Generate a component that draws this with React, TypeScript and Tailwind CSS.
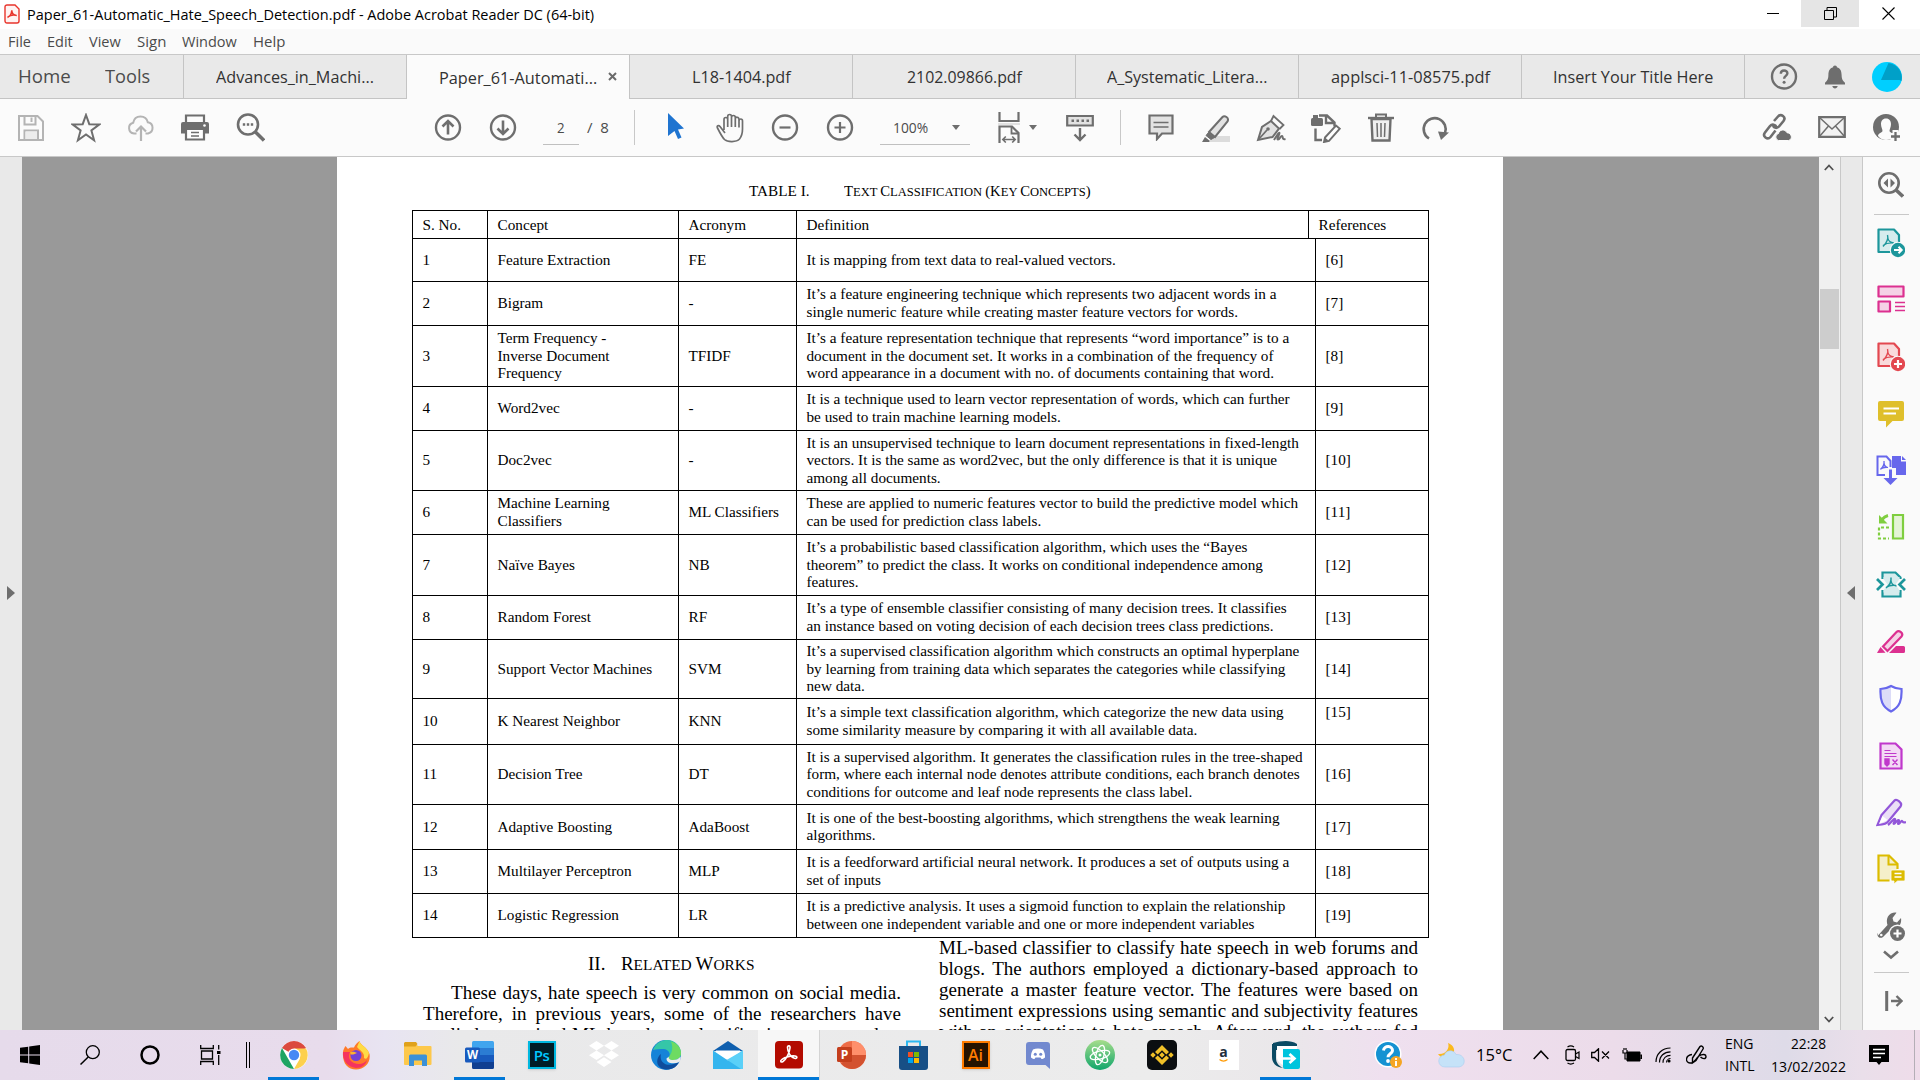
import React, { useLayoutEffect, useRef, useState } from "react";

type Kids = { children?: React.ReactNode };

/* A label squeezed or stretched to an exact width. */
function Fit({ w, className = "", children }: { w: number; className?: string } & Kids) {
  const ref = useRef<HTMLSpanElement>(null);
  const [scale, setScale] = useState(1);
  useLayoutEffect(() => {
    if (ref.current) setScale(w / ref.current.offsetWidth);
  }, [w]);
  return (
    <span className={"inline-block shrink-0 " + className} style={{ width: w }}>
      <span ref={ref} className="inline-block origin-left whitespace-nowrap" style={{ transform: `scaleX(${scale})` }}>
        {children}
      </span>
    </span>
  );
}

function Svg({ w = 28, h = 28, vb, className = "", children }: { w?: number; h?: number; vb?: string; className?: string } & Kids) {
  return (
    <svg width={w} height={h} viewBox={vb ?? `0 0 ${w} ${h}`} fill="none" className={"block shrink-0 " + className}>
      {children}
    </svg>
  );
}

const G = "#6e6e6e";

function Slot({ children, nudge }: { nudge?: boolean } & Kids) {
  return <div className={"flex w-[55px] shrink-0 items-center justify-center " + (nudge ? "pr-[2px]" : "")}>{children}</div>;
}

/* ---------- title bar, menu and tabs ---------- */

function TitleBar() {
  return (
    <div className="flex h-[29px] items-start bg-white">
      <Svg w={16} h={20} className="ml-1 mt-1">
        <path d="M3 1h8l4 4v12a2 2 0 0 1-2 2H3a2 2 0 0 1-2-2V3a2 2 0 0 1 2-2z" fill="#fff3f2" stroke="#e8352c" strokeWidth="1.4" />
        <path d="M3.500 13.500c2-1 4-4 4.300-7.300M7.800 6.200c0 3 2 5 5 5.300M4 12.800c2-1.600 5-2.200 8-1.600" stroke="#e8352c" strokeWidth="1.5" />
      </Svg>
      <Fit w={567} className="ml-[7px] mt-[3px] text-[15px] leading-[22px] text-black">
        Paper_61-Automatic_Hate_Speech_Detection.pdf - Adobe Acrobat Reader DC (64-bit)
      </Fit>
      <div className="ml-auto flex h-[27px]">
        <div className="flex w-[57px] items-center justify-center">
          <div className="h-px w-3 bg-black" />
        </div>
        <div className="flex w-[58px] items-center justify-center bg-[#e5e5e5]">
          <Svg w={13} h={13}>
            <path d="M.5 3.500h9v9h-9zM3 3V.5h9.500v9.500H10" stroke="#000" />
          </Svg>
        </div>
        <div className="flex w-[61px] items-center justify-center pr-[3px]">
          <Svg w={13} h={13}>
            <path d="M.5.5l12 12M12.500.5l-12 12" stroke="#000" strokeWidth="1.1" />
          </Svg>
        </div>
      </div>
    </div>
  );
}

function MenuBar() {
  return (
    <div className="flex h-[26px] items-center border-b border-[#c8c8c8] bg-[#fafafa] pl-2 text-[14.500px] text-[#4b4b4b]">
      <Fit w={23}>File</Fit>
      <Fit w={26} className="ml-[16px]">Edit</Fit>
      <Fit w={32} className="ml-[16px]">View</Fit>
      <Fit w={29} className="ml-[16px]">Sign</Fit>
      <Fit w={55} className="ml-[16px]">Window</Fit>
      <Fit w={32} className="ml-[16px]">Help</Fit>
    </div>
  );
}

function Tab({ w, children, active }: { w: number; active?: boolean } & Kids) {
  return (
    <div
      className={
        "relative flex w-[223px] shrink-0 items-center justify-center border-r border-[#c4c4c4] pt-px " +
        (active ? "bg-[#fbfbfb]" : "border-b bg-[#e9e9e9]")
      }
    >
      <Fit w={w}>{children}</Fit>
      {active && (
        <Svg w={9} h={9} className="absolute right-[12px] top-[17px]">
          <path d="M1 1l7 7M8 1L1 8" stroke="#6a6a6a" strokeWidth="2" />
        </Svg>
      )}
    </div>
  );
}

function TabStrip() {
  return (
    <div className="flex h-[44px] bg-[#e9e9e9] text-[17px] text-[#323232]">
      <div className="flex w-[184px] shrink-0 items-center border-b border-r border-[#c4c4c4] pl-[18px] text-[19px] text-[#4b4b4b]">
        <Fit w={53}>Home</Fit>
        <Fit w={45} className="ml-[34px]">Tools</Fit>
      </div>
      <Tab w={158}>Advances_in_Machi...</Tab>
      <Tab w={158} active>Paper_61-Automati...</Tab>
      <Tab w={99}>L18-1404.pdf</Tab>
      <Tab w={115}>2102.09866.pdf</Tab>
      <Tab w={160}>A_Systematic_Litera...</Tab>
      <Tab w={159}>applsci-11-08575.pdf</Tab>
      <Tab w={160}>Insert Your Title Here</Tab>
      <div className="flex flex-1 items-center border-b border-[#c4c4c4] pl-[25px]">
        <Svg w={28} h={28}>
          <circle cx="14" cy="13.500" r="12" stroke={G} strokeWidth="2.400" />
          <path d="M10.800 10.700c0-4.300 6.600-4.100 6.600-.4 0 2.600-3.300 2.700-3.300 5.500" stroke={G} strokeWidth="2.400" />
          <circle cx="14.100" cy="19.300" r="1.500" fill={G} />
        </Svg>
        <Svg w={22} h={26} className="ml-[26px]">
          <path d="M11 1.500c1.300 0 1.900.8 1.900 1.800 3.600 1 4.600 4 4.700 7.500.1 4.800 1.200 6 3.400 8v1.700H1v-1.700c2.200-2 3.300-3.200 3.400-8 .1-3.500 1.100-6.500 4.700-7.500 0-1 .6-1.800 1.900-1.800zM8.300 22h5.400c-.3 1.600-1.400 2.400-2.700 2.400S8.600 23.600 8.300 22z" fill={G} />
        </Svg>
        <Svg w={30} h={30} className="ml-[26px]">
          <circle cx="15" cy="15" r="15" fill="#00cfff" />
          <path d="M16.500 1A15 15 0 0 1 29.500 19l-2-1H9z" fill="#00a0c8" />
        </Svg>
      </div>
    </div>
  );
}

/* ---------- toolbar ---------- */

function Caret() {
  return (
    <Svg w={8} h={5}>
      <path d="M0 0h8L4 5z" fill={G} />
    </Svg>
  );
}

function Toolbar() {
  return (
    <div className="flex h-[58px] items-stretch border-b border-[#c8c8c8] bg-[#fbfbfb] pl-[3px] text-[15px] text-[#4b4b4b]">
      <Slot>
        <Svg>
          <path d="M2 2h18.500l5.500 5.500V26H2z" stroke="#b4b4b4" strokeWidth="2" />
          <path d="M7.500 2v8.500h11V2M7.500 26v-9.500h13.500V26" stroke="#b4b4b4" strokeWidth="2" />
          <path d="M8.500 17.500h11.500V25H8.500z" fill="#ececec" />
          <path d="M14.500 3.500v4.500" stroke="#b4b4b4" strokeWidth="2" />
        </Svg>
      </Slot>
      <Slot>
        <Svg w={30} h={30}>
          <path d="M15 2l3.300 9.200 9.900.3-7.800 6 2.700 9.700L15 21.500l-8.100 5.700 2.700-9.700-7.800-6 9.900-.3z" stroke={G} strokeWidth="2" />
        </Svg>
      </Slot>
      <Slot>
        <Svg w={28} h={28}>
          <path d="M9.500 19.500H7a5.500 5.500 0 0 1-.8-10.800C7 4.500 10 2.500 13.500 2.500c3.700 0 6.500 2.300 7.300 5.800A5.700 5.700 0 0 1 21 19.500h-2.500" stroke="#b4b4b4" strokeWidth="2" />
          <path d="M14 27V13M9 17.500l5-5 5 5" stroke="#b4b4b4" strokeWidth="2.200" />
        </Svg>
      </Slot>
      <Slot nudge>
        <Svg w={28} h={28}>
          <path d="M5 8V1.500h18v6.500" stroke={G} strokeWidth="2.200" />
          <path d="M2 8h24a2 2 0 0 1 2 2v9.500h-5V15H5v4.500H0V10a2 2 0 0 1 2-2z" fill={G} />
          <path d="M5 15h18V25.500H5z" fill="#fff" stroke={G} strokeWidth="2.200" />
          <path d="M10 18.500h8M10 22h8" stroke={G} strokeWidth="1.400" />
          <circle cx="23.500" cy="11.500" r="1.300" fill="#fff" />
        </Svg>
      </Slot>
      <Slot>
        <Svg w={29} h={29}>
          <circle cx="12" cy="11.500" r="10" stroke={G} strokeWidth="2.600" />
          <path d="M19 18.500l9 9" stroke={G} strokeWidth="3.400" />
          <path d="M6.800 11.500h2.400m1.600 0h2.400m1.600 0h2.400" stroke={G} strokeWidth="2.400" />
        </Svg>
      </Slot>
      <div className="w-[142px] shrink-0" />
      <Slot>
        <Svg>
          <circle cx="14" cy="13.500" r="12" stroke={G} strokeWidth="2.400" />
          <path d="M14 20.500V7.500M8.500 12.500L14 7l5.500 5.500" stroke={G} strokeWidth="2.600" />
        </Svg>
      </Slot>
      <Slot>
        <Svg>
          <circle cx="14" cy="13.500" r="12" stroke={G} strokeWidth="2.400" />
          <path d="M14 6.500v13M8.500 14.500l5.500 5.500 5.500-5.500" stroke={G} strokeWidth="2.600" />
        </Svg>
      </Slot>
      <div className="ml-[13px] mt-[11px] flex h-[35px] w-[36px] items-center justify-center border-b border-[#c0c0c0]">
        <Fit w={8}>2</Fit>
      </div>
      <div className="ml-2 mt-[11px] flex h-[35px] items-center">
        <Fit w={22}>/&nbsp; 8</Fit>
      </div>
      <div className="ml-[25px] mt-[11px] h-[35px] w-px bg-[#c8c8c8]" />
      <div className="w-[13px] shrink-0" />
      <Slot>
        <Svg w={16} h={30}>
          <path d="M0 0l16 15.500-6 1 3.500 8L10 26l-3.500-8L0 23z" fill="#1f74d0" />
        </Svg>
      </Slot>
      <Slot nudge>
        <Svg w={28} h={30}>
          <path d="M9 20l-5-6.500c-1.500-2-3.500-.5-2.500 1.500C4 20 6 24 8.500 26.500c3 2.800 12 2.800 15-.5 2-2.500 3-6 3-10V8c0-2.700-3.500-2.700-3.500 0v6.500M8 17V6.500c0-2.700 3.700-2.700 3.700 0V14M11.700 7V3.500c0-2.700 3.800-2.700 3.800 0V14M15.500 4.500c0-2.700 3.800-2.700 3.800 0V14M19.300 6c0-2.700 3.700-2.200 3.700.5v8" stroke={G} strokeWidth="1.700" />
        </Svg>
      </Slot>
      <Slot nudge>
        <Svg>
          <circle cx="14" cy="13.500" r="12" stroke={G} strokeWidth="2.400" />
          <path d="M8.500 13.500h11" stroke={G} strokeWidth="2.200" />
        </Svg>
      </Slot>
      <Slot nudge>
        <Svg>
          <circle cx="14" cy="13.500" r="12" stroke={G} strokeWidth="2.400" />
          <path d="M8.500 13.500h11M14 8v11" stroke={G} strokeWidth="2.200" />
        </Svg>
      </Slot>
      <div className="ml-[12px] mt-[11px] flex h-[35px] w-[90px] items-center border-b border-[#c0c0c0] pl-[13px]">
        <Fit w={35}>100%</Fit>
        <div className="ml-[24px]">
          <Caret />
        </div>
      </div>
      <div className="ml-[28px] flex items-center">
        <Svg w={22} h={31}>
          <path d="M1.500 0v9h19V0" stroke={G} strokeWidth="2.200" />
          <path d="M0 12h22" stroke="#d8d8d8" strokeWidth="1.500" />
          <path d="M1.500 31V14.500h12.500l6.500 6.500v10" stroke={G} strokeWidth="2.200" />
          <path d="M13.500 14.500V21.500h7" stroke={G} strokeWidth="1.800" />
          <path d="M5 27.500h12M7.800 24.500l-3 3 3 3M14.200 24.500l3 3-3 3" stroke={G} strokeWidth="1.600" />
        </Svg>
        <div className="ml-[9px]">
          <Caret />
        </div>
        <Svg w={28} h={28} className="ml-[29px]">
          <path d="M1.200 2h25.600v9.500H1.200z" fill="#e2e2e2" stroke={G} strokeWidth="2.200" />
          <path d="M5.500 6.800h2.500m2.500 0h2.500m2.500 0h2.500m2.500 0h2.500" stroke={G} strokeWidth="2.400" />
          <path d="M14 14v12M8.500 20.500l5.500 5.500 5.500-5.500" stroke={G} strokeWidth="2.400" />
        </Svg>
      </div>
      <div className="ml-[26px] mt-[11px] h-[35px] w-px bg-[#c8c8c8]" />
      <div className="w-[12px] shrink-0" />
      <Slot>
        <Svg w={26} h={27}>
          <path d="M1.500 1.500h23v18H14l-5 5.500v-5.500H1.500z" fill="#e2e2e2" stroke={G} strokeWidth="2.200" />
          <path d="M5.500 8.500h15M5.500 13h15" stroke={G} strokeWidth="1.500" />
        </Svg>
      </Slot>
      <Slot>
        <Svg w={28} h={28}>
          <path d="M8 28v-6h20v6z" fill="#dcdcdc" />
          <path d="M7 18L20.500 3c2-2 7 .5 5 4.500L13 23z" fill="#e2e2e2" stroke={G} strokeWidth="2" />
          <path d="M6.500 18.500l6 5-3.500 2-5-4z" fill={G} stroke={G} />
          <path d="M0 28l3-5 5 4-1 1z" fill={G} />
        </Svg>
      </Slot>
      <Slot>
        <Svg w={30} h={28}>
          <path d="M2 26L6 13l9-6 8 7.500-6.500 8.500z" fill="#e2e2e2" stroke={G} strokeWidth="2" />
          <path d="M15 7l2.500-5 10 9-4 4M2.500 25.500L11 16" stroke={G} strokeWidth="1.800" />
          <circle cx="12" cy="15" r="1.800" fill={G} />
          <path d="M18 26c3-5 5-8 5.500-7s-3.500 6.500-1.500 6.500 2.500-4 4-3.500-.5 4 3.500 3" stroke={G} strokeWidth="2" />
        </Svg>
      </Slot>
      <Slot>
        <Svg w={30} h={30}>
          <path d="M8 2.500h8l7.500 7v4M15 2.500v7.500h8.500M4.500 15.500V27H11" stroke={G} strokeWidth="2.400" />
          <rect x="0" y="5" width="12" height="8" rx="1.500" fill={G} />
          <path d="M2 5V2h5v3z" fill={G} />
          <path d="M14 24.500L25 12.500l3.800 3.200L18 27.800l-5 1.200z" fill="#fff" stroke={G} strokeWidth="1.900" />
          <path d="M13 29l1-4.500 3.500 3z" fill={G} />
        </Svg>
      </Slot>
      <Slot>
        <Svg w={26} h={29}>
          <path d="M0 5h26" stroke={G} strokeWidth="2.400" />
          <path d="M8 5V1.500h10V5" stroke={G} strokeWidth="2" />
          <path d="M3.500 6l1 21.500h17l1-21.500z" fill="#f0f0f0" stroke={G} strokeWidth="2.400" />
          <path d="M9 10l.5 14M13 10v14M17 10l-.5 14" stroke={G} strokeWidth="1.500" />
        </Svg>
      </Slot>
      <Slot nudge>
        <Svg w={28} h={26}>
          <path d="M8 23.500A11 11 0 1 1 24 18" stroke={G} strokeWidth="2.600" />
          <path d="M17 16.500l11 1-8 7.500z" fill={G} />
        </Svg>
      </Slot>
      <div className="ml-auto flex pr-[6px]">
        <Slot>
          <Svg w={30} h={30}>
            <path d="M12 8l4-4.500c3-3.500 8.500.5 5.500 4.500L17 13.500c-2 2.200-5 1.500-6-.5M13.500 17.500l-5 6.500c-3 3.500-8.500-.5-5.500-4.500L8 13c2-2.200 5.500-1.500 6.500 1" stroke={G} strokeWidth="2.600" />
            <path d="M16.500 27.500a3.600 3.600 0 0 1 0-7c.7-4 6.500-5 8.500-.8 5 .2 6 6.800 1.500 7.800z" fill={G} stroke="#fbfbfb" strokeWidth="1" />
          </Svg>
        </Slot>
        <Slot>
          <Svg w={28} h={24}>
            <path d="M1.200 1.200h25.600v19.600H1.200z" fill="#f2f2f2" stroke={G} strokeWidth="2.200" />
            <path d="M1.500 1.500L14 13 26.500 1.500M1.500 20.500l9-10.500M26.500 20.500L17.500 10" stroke={G} strokeWidth="1.500" />
          </Svg>
        </Slot>
        <Slot>
          <Svg w={28} h={28}>
            <circle cx="13" cy="13" r="13" fill={G} />
            <path d="M13 4.500c3.500 0 5 2.500 5 5.500 0 3.500-1.500 5-1.500 7 0 1.800 4.500 2 4.500 5-2 2.500-5 4-8 4s-6-1.500-8-4c0-3 4.500-3.200 4.500-5 0-2-1.500-3.500-1.500-7 0-3 1.500-5.500 5-5.500z" fill="#fbfbfb" />
            <path d="M22.500 16v12M16.500 22h12" stroke="#fbfbfb" strokeWidth="6" />
            <path d="M22.500 18v9M18 22.500h9" stroke={G} strokeWidth="2.300" />
          </Svg>
        </Slot>
      </div>
    </div>
  );
}

/* ---------- document ---------- */

type Row = { h: string; concept: string[]; acr: string; def: string[]; top?: boolean };

const rows: Row[] = [
  { h: "h-[43px]", concept: ["Feature Extraction"], acr: "FE", def: ["It is mapping from text data to real-valued vectors."] },
  { h: "h-[44px]", concept: ["Bigram"], acr: "-", def: ["It’s a feature engineering technique which represents two adjacent words in a", "single numeric feature while creating master feature vectors for words."] },
  { h: "h-[61px]", concept: ["Term Frequency -", "Inverse Document", "Frequency"], acr: "TFIDF", def: ["It’s a feature representation technique that represents “word importance” is to a", "document in the document set. It works in a combination of the frequency of", "word appearance in a document with no. of documents containing that word."] },
  { h: "h-[44px]", concept: ["Word2vec"], acr: "-", def: ["It is a technique used to learn vector representation of words, which can further", "be used to train machine learning models."] },
  { h: "h-[60px]", concept: ["Doc2vec"], acr: "-", def: ["It is an unsupervised technique to learn document representations in fixed-length", "vectors. It is the same as word2vec, but the only difference is that it is unique", "among all documents."] },
  { h: "h-[44px]", concept: ["Machine Learning", "Classifiers"], acr: "ML Classifiers", def: ["These are applied to numeric features vector to build the predictive model which", "can be used for prediction class labels."] },
  { h: "h-[61px]", concept: ["Naïve Bayes"], acr: "NB", def: ["It’s a probabilistic based classification algorithm, which uses the “Bayes", "theorem” to predict the class. It works on conditional independence among", "features."] },
  { h: "h-[44px]", concept: ["Random Forest"], acr: "RF", def: ["It’s a type of ensemble classifier consisting of many decision trees. It classifies", "an instance based on voting decision of each decision trees class predictions."] },
  { h: "h-[59px]", concept: ["Support Vector Machines"], acr: "SVM", def: ["It’s a supervised classification algorithm which constructs an optimal hyperplane", "by learning from training data which separates the categories while classifying", "new data."] },
  { h: "h-[46px]", concept: ["K Nearest Neighbor"], acr: "KNN", top: true, def: ["It’s a simple text classification algorithm, which categorize the new data using", "some similarity measure by comparing it with all available data."] },
  { h: "h-[60px]", concept: ["Decision Tree"], acr: "DT", def: ["It is a supervised algorithm. It generates the classification rules in the tree-shaped", "form, where each internal node denotes attribute conditions, each branch denotes", "conditions for outcome and leaf node represents the class label."] },
  { h: "h-[45px]", concept: ["Adaptive Boosting"], acr: "AdaBoost", def: ["It is one of the best-boosting algorithms, which strengthens the weak learning", "algorithms."] },
  { h: "h-[44px]", concept: ["Multilayer Perceptron"], acr: "MLP", def: ["It is a feedforward artificial neural network. It produces a set of outputs using a", "set of inputs"] },
  { h: "h-[44px]", concept: ["Logistic Regression"], acr: "LR", def: ["It is a predictive analysis. It uses a sigmoid function to explain the relationship", "between one independent variable and one or more independent variables"] },
];

function Lines({ lines }: { lines: string[] }) {
  return (
    <div>
      {lines.map((l) => (
        <div key={l} className="whitespace-nowrap">{l}</div>
      ))}
    </div>
  );
}

function ConceptTable() {
  const base = "flex shrink-0 items-center border-r border-black ";
  const head = base + "pl-[9.500px] ";
  const cell = base + "pb-[1.500px] pl-[9.500px] ";
  return (
    <div className="ml-[75px] w-[1017px] border-l border-t border-black text-[15.240px] leading-[17.500px]">
      <div className="flex h-[28px] border-b border-black">
        <div className={head + "w-[75px]"}>S. No.</div>
        <div className={head + "w-[191px]"}>Concept</div>
        <div className={head + "w-[118px]"}>Acronym</div>
        <div className={head + "w-[512px]"}>Definition</div>
        <div className={head + "w-[120px]"}>References</div>
      </div>
      {rows.map((r, i) => (
        <div key={i} className={"flex border-b border-black " + r.h}>
          <div className={cell + "w-[75px]"}>{i + 1}</div>
          <div className={cell + "w-[191px]"}><Lines lines={r.concept} /></div>
          <div className={cell + "w-[118px]"}>{r.acr}</div>
          <div className={cell + "w-[519px]"}><Lines lines={r.def} /></div>
          <div className={base + "w-[113px] pl-[9.500px] " + (r.top ? "pb-[19px]" : "pb-[1.500px]")}>[{i + 6}]</div>
        </div>
      ))}
    </div>
  );
}

/* Pairs of a full-size initial and the smaller capitals after it. */
function SmallCaps({ parts, small }: { parts: [string, string][]; small: string }) {
  return (
    <>
      {parts.map(([a, b]) => (
        <React.Fragment key={a + b}>
          {a}
          <span className={small}>{b}</span>
        </React.Fragment>
      ))}
    </>
  );
}

function Page() {
  const line = "whitespace-nowrap [text-align-last:justify]";
  return (
    <div className="h-full w-[1166px] shrink-0 overflow-hidden bg-white font-['Liberation_Serif',serif] text-black">
      <div className="flex h-[53px] items-start pl-[412px] pt-[25px] text-[15.240px] leading-[18px]">
        <Fit w={61}>TABLE I.</Fit>
        <Fit w={247} className="ml-[34px]">
          <SmallCaps small="text-[13px]" parts={[["T", "EXT "], ["C", "LASSIFICATION "], ["(K", "EY "], ["C", "ONCEPTS"], [")", ""]]} />
        </Fit>
      </div>
      <ConceptTable />
      <div className="-mt-px flex pl-[86px] text-[19.050px] leading-[21px]">
        <div className="w-[478px] shrink-0 pt-[16px]">
          <div className="flex pl-[165px]">
            <Fit w={17}>II.</Fit>
            <Fit w={133} className="ml-[16px]">
              <SmallCaps small="text-[15.500px]" parts={[["R", "ELATED "], ["W", "ORKS"]]} />
            </Fit>
          </div>
          <div className={line + " ml-[28px] mt-[7px]"}>These days, hate speech is very common on social media.</div>
          <div className={line}>Therefore, in previous years, some of the researchers have</div>
          <div className={line}>applied supervised ML-based text classification on many data</div>
        </div>
        <div className="ml-[38px] w-[479px] shrink-0">
          <div className={line}>ML-based classifier to classify hate speech in web forums and</div>
          <div className={line}>blogs. The authors employed a dictionary-based approach to</div>
          <div className={line}>generate a master feature vector. The features were based on</div>
          <div className={line}>sentiment expressions using semantic and subjectivity features</div>
          <div className={line}>with an orientation to hate speech. Afterward, the authors fed</div>
        </div>
      </div>
    </div>
  );
}

/* ---------- right tool pane ---------- */

function ToolSlot({ children }: Kids) {
  return <div className="flex h-[56.920px] shrink-0 items-center justify-center pr-[2px]">{children}</div>;
}

function PdfDoc({ c, fill, children }: { c: string; fill: string } & Kids) {
  return (
    <Svg w={28} h={30}>
      <path d="M1.500 1.500h15.500l5 5.500v17H1.500z" fill={fill} stroke={c} strokeWidth="2.200" strokeLinejoin="round" />
      <path d="M10.500 7c1 3-.5 8-4.500 11.500M10.800 10c.5 3 3 4.500 6 5M6 17.500c3-2.200 6-3 10.500-2.500" stroke={c} strokeWidth="1.400" />
      <circle cx="21" cy="22" r="8.300" fill="#fafafa" />
      <circle cx="21" cy="22" r="7.200" fill={c} />
      {children}
    </Svg>
  );
}

function ToolPane() {
  return (
    <div className="flex w-[57px] shrink-0 flex-col bg-[#fafafa]">
      <div className="flex h-[57px] items-center justify-center pr-[2px]">
        <Svg w={26} h={27}>
          <circle cx="11" cy="11" r="9.700" stroke={G} strokeWidth="2.600" />
          <path d="M17.500 17.500l7.500 7" stroke={G} strokeWidth="3.600" />
          <path d="M10 6.500v9l-4.500-4.500zM12.500 6.500v9l4.500-4.500z" fill={G} />
        </Svg>
      </div>
      <div className="mx-auto h-px w-[35px] shrink-0 bg-[#c8c8c8]" />
      <ToolSlot>
        <PdfDoc c="#1c969b" fill="#d6eced">
          <path d="M17 22h7M21.500 18.800l3.200 3.200-3.200 3.200" stroke="#fff" strokeWidth="2" />
        </PdfDoc>
      </ToolSlot>
      <ToolSlot>
        <Svg w={28} h={30}>
          <path d="M1.500 1.500h25v10h-25zM1.500 16.500h11.500v10H1.500z" fill="#f5d2e6" stroke="#dc3090" strokeWidth="2.200" strokeLinejoin="round" />
          <path d="M18 17.500h10M18 21.500h10M18 25.500h10" stroke="#dc3090" strokeWidth="1.300" />
        </Svg>
      </ToolSlot>
      <ToolSlot>
        <PdfDoc c="#e34850" fill="#f9dadb">
          <path d="M17 22h8M21 18v8" stroke="#fff" strokeWidth="2.200" />
        </PdfDoc>
      </ToolSlot>
      <ToolSlot>
        <Svg w={26} h={28}>
          <path d="M2 1h22a2 2 0 0 1 2 2v16a2 2 0 0 1-2 2h-9.500L8 27.500V21H2a2 2 0 0 1-2-2V3a2 2 0 0 1 2-2z" fill="#dfbf2b" />
          <path d="M5.500 8.500h15.500M5.500 13.500h12.500" stroke="#fff" strokeWidth="2" />
        </Svg>
      </ToolSlot>
      <ToolSlot>
        <Svg w={30} h={32}>
          <path d="M9 20H1.500V1.500h9l4 4.500v6" stroke="#6767ec" strokeWidth="2" />
          <path d="M8 6c.5 3-1 6-3.500 8.500M8 8.500c.5 2.500 2 4 4 4.200M4.500 14c2-1.500 4-2 7-1.700" stroke="#6767ec" strokeWidth="1.300" />
          <path d="M16 1h9v5.500h5V20H20v-7h-4z" fill="#6767ec" />
          <path d="M26 1l4 4h-4z" fill="#6767ec" />
          <path d="M14.500 13v10" stroke="#fafafa" strokeWidth="7" />
          <path d="M14.500 14.500V24" stroke="#6767ec" strokeWidth="3" />
          <path d="M7.500 23h14l-7 7z" fill="#6767ec" />
        </Svg>
      </ToolSlot>
      <ToolSlot>
        <Svg w={28} h={29}>
          <path d="M16 2h10v23.500H16z" fill="#e4f4d6" stroke="#7fce3f" strokeWidth="2.200" />
          <path d="M12 14.500H2v11h10" stroke="#7fce3f" strokeWidth="2.200" strokeDasharray="3 2" />
          <path d="M11 2.500C9 3 7 4 5 6.500" stroke="#7fce3f" strokeWidth="3" />
          <path d="M2 2v8.500h8.500z" fill="#7fce3f" />
        </Svg>
      </ToolSlot>
      <ToolSlot>
        <Svg w={30} h={28}>
          <path d="M6.500 8V1.500h13l5 5V8M6.500 19v6.500h18V19" stroke="#1c969b" strokeWidth="2.200" fill="#d6eced" />
          <path d="M7.500 6h16v2l-4 5.500 4 6v2h-16v-2l4-6-4-5.500z" fill="#d6eced" />
          <path d="M1 8l5.500 5.500L1 19M29 8l-5.500 5.500L29 19" stroke="#1c969b" strokeWidth="2.700" />
          <path d="M15 6.500c.5 4-1 7.500-5 10.500M15 10c.5 3 2.500 4.500 5.500 5M10 16.500c3-2 6-2.500 10-2" stroke="#1c969b" strokeWidth="1.500" />
        </Svg>
      </ToolSlot>
      <ToolSlot>
        <Svg w={28} h={26}>
          <path d="M12 24l7-7h7.500a1.500 1.500 0 0 1 1.500 1.500V22.500a1.500 1.500 0 0 1-1.500 1.500z" fill="#dc3090" />
          <path d="M6 17.500L19.500 3c2.500-2.500 7.500 1.500 5 4.500L10.500 22z" fill="#f5d2e6" stroke="#dc3090" strokeWidth="2.200" />
          <path d="M0 24l3.500-6 5 5.800z" fill="#dc3090" />
        </Svg>
      </ToolSlot>
      <ToolSlot>
        <Svg w={24} h={29}>
          <path d="M12 2C9.500 3.500 5.500 5 1.500 5c-.5 11 1.500 18 10.500 22.500C21 23 23 16 22.500 5 18.500 5 14.500 3.500 12 2z" fill="#fff" />
          <path d="M12 2C9.500 3.500 5.500 5 1.500 5c-.5 11 1.500 18 10.500 22.500z" fill="#dcdcf8" />
          <path d="M12 2C9.500 3.500 5.500 5 1.500 5c-.5 11 1.500 18 10.500 22.500C21 23 23 16 22.500 5 18.500 5 14.500 3.500 12 2z" stroke="#6767ec" strokeWidth="2.200" />
        </Svg>
      </ToolSlot>
      <ToolSlot>
        <Svg w={24} h={28}>
          <path d="M1.500 1.500h15l6 6v19h-21z" fill="#f3daf5" stroke="#c038cc" strokeWidth="2.200" />
          <path d="M5.500 8.500h6M5.500 11.500h12M5.500 14.500h12" stroke="#c038cc" strokeWidth="1.200" />
          <path d="M6 17h4v5l-2 2-2-2zM13.500 17.500l5 5.500M18.500 17.500l-5 5.500" fill="#c038cc" stroke="#c038cc" strokeWidth="1.400" />
        </Svg>
      </ToolSlot>
      <ToolSlot>
        <Svg w={30} h={29}>
          <path d="M1.500 27l4-10L18.500 2.500c2-2.200 8.500 2.500 6 6L12.500 23c-1 2-3 3.500-11 4z" fill="#ebdff7" stroke="#9256d9" strokeWidth="2.200" />
          <path d="M3 26l3.500-8 5 4z" fill="#fff" />
          <path d="M12 27c4-3 6-7 7-6s-2.500 5-1 5 3-4.500 4.500-4-1.500 4 0 4 2.500-3.500 3.500-3 .5 2.500 4 1" stroke="#9256d9" strokeWidth="2.200" />
        </Svg>
      </ToolSlot>
      <ToolSlot>
        <Svg w={28} h={31}>
          <path d="M12.500 26.500h-11v-25H12l8.500 8.500v5" fill="#f5efc9" stroke="#dcbc00" strokeWidth="2.200" />
          <path d="M11.500 2v8.500h9" stroke="#dcbc00" strokeWidth="2" />
          <path d="M15 16h12a1 1 0 0 1 1 1v9a1 1 0 0 1-1 1h-6.500L17 30v-3h-2a1 1 0 0 1-1-1v-9a1 1 0 0 1 1-1z" fill="#dcbc00" stroke="#fafafa" strokeWidth=".8" />
          <path d="M17.500 19.500h7M17.500 23h7" stroke="#fff" strokeWidth="1.300" />
        </Svg>
      </ToolSlot>
      <div className="flex h-[50px] shrink-0 items-center justify-center pr-[2px] pt-[8px]">
        <Svg w={28} h={29}>
          <path d="M1 23.500L10.500 13C9 8.500 10 4 14 1.500c2-1 4-1 5.500-.8L15.500 6l1 3.500 3.500 1 4-4.500c.7 5-1 9-5.500 10l-4 .5-8.500 8.500c-3 2.500-7-1-5-4z" fill={G} />
          <circle cx="4.300" cy="23" r="1.300" fill="#fafafa" />
          <circle cx="20.500" cy="21.500" r="9" fill="#fafafa" />
          <circle cx="20.500" cy="21.500" r="7.500" fill={G} />
          <path d="M16.500 21.500h8M20.500 17.500v8" stroke="#fff" strokeWidth="2.200" />
        </Svg>
      </div>
      <Svg w={16} h={10} className="ml-[20px] mt-[2px]">
        <path d="M1 1.500l7 6 7-6" stroke={G} strokeWidth="2.600" />
      </Svg>
      <div className="mx-auto mt-[12px] h-px w-[35px] shrink-0 bg-[#c8c8c8]" />
      <Svg w={18} h={20} className="ml-[22px] mt-[18px]">
        <path d="M1.700 0v20" stroke={G} strokeWidth="3" />
        <path d="M6 10h10M11.500 5l5 5-5 5" stroke={G} strokeWidth="2.400" />
      </Svg>
    </div>
  );
}

function Workspace() {
  return (
    <div className="flex h-[873px]">
      <div className="flex w-[22px] shrink-0 items-center bg-[#e9e9e9] pb-[2px] pl-[7px]">
        <Svg w={8} h={14}>
          <path d="M0 0v14l8-7z" fill={G} />
        </Svg>
      </div>
      <div className="flex w-[1797px] shrink-0 bg-[#999999] pl-[315px]">
        <Page />
      </div>
      <div className="flex w-[22px] shrink-0 flex-col items-center justify-between border-r border-[#c8c8c8] bg-[#f0f0f0] py-[7px] pr-px">
        <Svg w={10} h={7}>
          <path d="M.8 6l4.200-4.500L9.200 6" stroke="#505050" strokeWidth="1.800" />
        </Svg>
        <div className="mb-auto mt-[118px] h-[60px] w-[19px] bg-[#cdcdcd]" />
        <Svg w={10} h={7}>
          <path d="M.8 1l4.200 4.500L9.200 1" stroke="#505050" strokeWidth="1.800" />
        </Svg>
      </div>
      <div className="flex w-[22px] shrink-0 items-center border-r border-[#c8c8c8] bg-[#e9e9e9] pb-[2px] pl-[6px]">
        <Svg w={8} h={14}>
          <path d="M8 0v14L0 7z" fill={G} />
        </Svg>
      </div>
      <ToolPane />
    </div>
  );
}

/* ---------- taskbar ---------- */

function App62({ children, on, active }: { on?: boolean; active?: boolean } & Kids) {
  return (
    <div className={"relative flex w-[62px] shrink-0 items-center justify-center " + (active ? "border-r border-[#d4d4d4] bg-[#f7f7f7]" : "pl-px")}>
      {children}
      {(on || active) && (
        <div className={"absolute bottom-0 h-[3px] bg-[#0078d7] " + (active ? "inset-x-0" : "left-[6px] right-[5px]")} />
      )}
    </div>
  );
}

function Tile({ className, children }: { className: string } & Kids) {
  return <div className={"flex items-center justify-center leading-none " + className}>{children}</div>;
}

function Taskbar() {
  return (
    <div className="flex h-[50px] items-stretch bg-[linear-gradient(90deg,#e6dbeb_0%,#e8dcec_17%,#e8e4f2_20%,#e9e9ea_24%,#ececec_60%,#eae7ea_67%,#efe0ef_72%,#ecdcea_84%,#dedbe8_93%,#eadfea_97%,#efdcea_100%)]">
      <div className="flex w-[240px] shrink-0">
        <div className="flex w-[60px] items-center justify-center">
          <Svg w={20} h={20}>
            <path d="M0 2.800L8.200 1.700v7.800H0zM9.200 1.500L20 0v9.500H9.200zM0 10.500h8.200v7.800L0 17.200zM9.200 10.500H20V20L9.200 18.500z" fill="#000" />
          </Svg>
        </div>
        <div className="flex w-[60px] items-center justify-center">
          <Svg w={20} h={20}>
            <circle cx="12.800" cy="7.200" r="6.500" stroke="#000" strokeWidth="1.300" />
            <path d="M8.200 12L.5 19.500" stroke="#000" strokeWidth="1.500" />
          </Svg>
        </div>
        <div className="flex w-[60px] items-center justify-center">
          <Svg w={20} h={20}>
            <circle cx="10" cy="10" r="8.500" stroke="#000" strokeWidth="2.500" />
          </Svg>
        </div>
        <div className="flex w-[60px] items-center justify-center">
          <Svg w={21} h={20}>
            <path d="M.7 0v3.500h12.600V0M.7 20v-3.500h12.600V20M1.500 6h11v8h-11zM18.700 0v4.500M18.700 10v10" stroke="#000" strokeWidth="1.300" />
            <path d="M17 6h3.500v3H17z" fill="#000" />
          </Svg>
        </div>
      </div>
      <div className="flex w-[22px] shrink-0 items-center pl-[6px]">
        <div className="h-[26px] w-[4px] border-x border-black" />
      </div>
      <App62 on>
        <Svg w={28} h={28}>
          <circle cx="14" cy="14" r="14" fill="#fff" />
          <path d="M14 14L1.900 7A14 14 0 0 1 26.100 7z" fill="#db4a3e" />
          <path d="M2 7l6 10.500L14 28A14 14 0 0 1 2 7z" fill="#1da462" />
          <path d="M26.100 7.500H14l6 10L14 28A14 14 0 0 0 26.100 7.500z" fill="#fdd04e" />
          <circle cx="14" cy="14" r="6.500" fill="#fff" />
          <circle cx="14" cy="14" r="5.200" fill="#4688f4" />
        </Svg>
      </App62>
      <App62>
        <Svg w={28} h={29}>
          <path d="M1 11c.3-2.500 1.500-4.500 2.500-6L6 8c2-2 4-1.500 6-1.500C13 3.500 15.500 1.500 17.500 0c.5 4 8 6.500 10 13 1.500 9-5 15.500-13.500 15.500C5.500 28.500 0 22 1 11z" fill="#ff7a2a" />
          <path d="M17.500 0c.5 4 7.500 6 9.500 12-1 5-3 7-5 5 1-6-5-8-7-11z" fill="#ffdb45" />
          <path d="M1 11c-.5 8 4 15 13 16 6 0 10-3.500 11-8-3 4-8 5-13 3C7 20 6 15 8 11z" fill="#f5345f" />
          <circle cx="14" cy="14.500" r="5.500" fill="#7442d6" />
          <path d="M8 11.500c3-1.500 5-.5 7 .5-2 .5-3.500 2-6 1.500z" fill="#ffb52e" />
        </Svg>
      </App62>
      <App62>
        <Svg w={28} h={26}>
          <path d="M1 1h10l3 3h12.500a1 1 0 0 1 1 1v17a1 1 0 0 1-1 1H1a1 1 0 0 1-1-1V2a1 1 0 0 1 1-1z" fill="#fdc84b" />
          <path d="M1 0h11l1.500 2-2 2.500H0V1z" fill="#e0a21b" />
          <path d="M5 24V14a1.500 1.500 0 0 1 1.500-1.500h15A1.500 1.500 0 0 1 23 14v10h-5v-5.500h-8V24z" fill="#3c91d8" />
        </Svg>
      </App62>
      <App62 on>
        <Svg w={30} h={28}>
          <path d="M7 1.500A1.500 1.500 0 0 1 8.500 0h19A1.500 1.500 0 0 1 29 1.500V7H7z" fill="#41a5ee" />
          <path d="M7 7h22v7H7z" fill="#2b7cd3" />
          <path d="M7 14h22v7H7z" fill="#185abd" />
          <path d="M7 21h22v5.500a1.500 1.500 0 0 1-1.500 1.500h-19A1.500 1.500 0 0 1 7 26.500z" fill="#103f91" />
          <rect x="0" y="6.500" width="15" height="15" rx="1.500" fill="#185abd" />
          <text x="7.500" y="18.200" textAnchor="middle" fontSize="11.500" fontWeight="700" fontFamily="Open Sans, sans-serif" fill="#fff">W</text>
        </Svg>
      </App62>
      <App62>
        <Tile className="h-[28px] w-[28px] border-2 border-[#00b8e0] bg-[#001d26] text-[15px] font-semibold tracking-[-0.500px] text-[#00c8ff] shadow">Ps</Tile>
      </App62>
      <App62>
        <Svg w={30} h={28}>
          <path d="M7.500 0L15 4.700 7.500 9.400 0 4.700zM22.500 0L30 4.700l-7.500 4.700L15 4.700zM0 14.200l7.500-4.700 7.500 4.700-7.500 4.700zM22.500 9.500l7.500 4.700-7.500 4.700-7.500-4.700zM7.500 21l7.500-4.700 7.500 4.700-7.500 5z" fill="#fff" />
        </Svg>
      </App62>
      <App62>
        <Svg w={30} h={30}>
          <circle cx="15" cy="15" r="15" fill="#1583d8" />
          <path d="M2 10C5 2 12 0 16 0c8 0 14 6 14 13 0 5-4 7-8 7-3.500 0-5-1.500-4-3 1.500-2 1-7-5-8-4 0-8 0-11 1z" fill="#35c6a8" />
          <path d="M20 1.500c6 2 10 6 10 11.500 0 5-4 7-8 7-3.500 0-5-1.500-4-3 2-3 5-8 2-15.500z" fill="#6edb62" />
          <path d="M10 14c-2 7 4 15 18 8-4 9-17 10-21 3-2-4 0-9 3-11z" fill="#0f4c9c" />
          <path d="M18 16.500c-1 2 1 3.500 4 3.500 3 0 6-1 7.500-3.500.5 2 0 4-1 5.500-6 2.500-13 1.500-13-3.500z" fill="#ececec" />
        </Svg>
      </App62>
      <App62>
        <Svg w={30} h={28}>
          <path d="M15 0l15 10H0z" fill="#0f5fae" />
          <path d="M3 9.500h24V18H3z" fill="#fff" />
          <path d="M0 9.500l15 10 15-10V28H0z" fill="#35b5ee" />
          <path d="M30 9.500V28H28L14 18.800z" fill="#5ad0f8" />
        </Svg>
      </App62>
      <App62 active>
        <Svg w={28} h={29}>
          <rect width="28" height="27.500" rx="4" fill="#b30b00" />
          <path d="M12.500 6.500c0-2.500 3-2 2.500.5-.5 5-4 11.500-7 13.500-2 1.200-3.500-.5-1-2.200 3-2.200 9-3.800 13-3.300 2.800.5 2.300 3-.5 2.300-3.500-1-7-6-7-10.800z" stroke="#fff" strokeWidth="1.600" />
        </Svg>
      </App62>
      <App62>
        <Svg w={29} h={28}>
          <circle cx="15" cy="14" r="14" fill="#ed6c47" />
          <path d="M15 0a14 14 0 0 1 14 14H15z" fill="#ff8f6b" />
          <path d="M15 14h14a14 14 0 0 1-25 8.600z" fill="#d35230" />
          <rect x="0" y="6" width="15" height="15" rx="1.500" fill="#c43e1c" />
          <text x="7.500" y="18" textAnchor="middle" fontSize="12" fontWeight="700" fontFamily="Open Sans, sans-serif" fill="#fff">P</text>
        </Svg>
      </App62>
      <App62>
        <Svg w={29} h={30}>
          <path d="M8 7V1.500h13V7" stroke="#2cb8f0" strokeWidth="2" />
          <path d="M0 6h29v21a3 3 0 0 1-3 3H3a3 3 0 0 1-3-3z" fill="#174f86" />
          <path d="M9 12h5v5H9z" fill="#f25022" /><path d="M15 12h5v5h-5z" fill="#7fba00" />
          <path d="M9 18h5v5H9z" fill="#00a4ef" /><path d="M15 18h5v5h-5z" fill="#ffb900" />
        </Svg>
      </App62>
      <App62>
        <Tile className="h-[28px] w-[28px] border-2 border-[#ff7c00] bg-[#261300] text-[16px] font-semibold text-[#ff7c00] shadow">Ai</Tile>
      </App62>
      <App62>
        <Svg w={24} h={27}>
          <path d="M3 0h18a3 3 0 0 1 3 3v24l-4.500-4H3a3 3 0 0 1-3-3V3a3 3 0 0 1 3-3z" fill="#7289cf" />
          <path d="M7 7.500c3-1.500 7-1.500 10 0 1.500 2.500 2.200 5 2 8-1.500 1.200-2.500 1.500-3.500 1.500l-1-1.500h-5l-1 1.500c-1 0-2-.3-3.500-1.500-.2-3 .5-5.500 2-8z" fill="#fff" />
          <circle cx="9.300" cy="12.300" r="1.500" fill="#7289cf" /><circle cx="14.700" cy="12.300" r="1.500" fill="#7289cf" />
        </Svg>
      </App62>
      <App62>
        <Svg w={30} h={30}>
          <defs>
            <linearGradient id="atom" x1="0" y1="0" x2="0" y2="1">
              <stop offset="0" stopColor="#a6dd8c" />
              <stop offset="1" stopColor="#10a66b" />
            </linearGradient>
          </defs>
          <circle cx="15" cy="15" r="15" fill="url(#atom)" />
          <g stroke="#fff" strokeWidth="1.300">
            <ellipse cx="15" cy="15" rx="4" ry="10" transform="rotate(15 15 15)" />
            <ellipse cx="15" cy="15" rx="4" ry="10" transform="rotate(75 15 15)" />
            <ellipse cx="15" cy="15" rx="4" ry="10" transform="rotate(-45 15 15)" />
          </g>
          <circle cx="15" cy="15" r="1.500" fill="#fff" />
        </Svg>
      </App62>
      <App62>
        <Svg w={30} h={30}>
          <rect width="30" height="30" rx="5" fill="#0b0e11" />
          <path d="M15 12.300l2.700 2.700-2.700 2.700-2.700-2.700zM6 12.300L8.700 15 6 17.700 3.300 15zM24 12.300l2.700 2.700-2.700 2.700-2.700-2.700zM8 12l7-7 7 7-2.700 2.500L15 10.200l-4.300 4.300zM8 18l7 7 7-7-2.700-2.500L15 19.800l-4.300-4.300z" fill="#f0c028" />
        </Svg>
      </App62>
      <App62>
        <div className="flex h-[30px] w-[30px] flex-col items-center bg-white pt-[5px] text-[14px] font-bold leading-[14px] text-[#232f3e]">
          a
          <Svg w={9} h={3}>
            <path d="M.5.5c2.500 2 5.500 2 8 0" stroke="#ff9900" strokeWidth="1.200" />
          </Svg>
        </div>
      </App62>
      <App62 on>
        <Svg w={30} h={30}>
          <path d="M2 3c8-2 17-3.500 24 1v6H2z" fill="#0b4a63" />
          <path d="M1 4h4v14c0 5 3 8 7 10-7-1-11-5-11-11z" fill="#0b4a63" />
          <path d="M6 6h20v20H14c-5-2-8-5-8-9z" fill="#fff" />
          <path d="M12 9h15a2 2 0 0 1 2 2v16a2 2 0 0 1-2 2H14a2 2 0 0 1-2-2z" fill="#00c4dd" />
          <path d="M8 18.500h14M18.500 14l5 4.500-5 4.500" stroke="#fff" strokeWidth="2.600" />
        </Svg>
      </App62>

      <div className="flex items-center pl-[58px]">
        <Svg w={30} h={30}>
          <circle cx="14" cy="14" r="13.500" fill="#fff" />
          <circle cx="14" cy="14" r="12" fill="#1592d2" />
          <path d="M9.500 10.500c.5-5.500 9.500-5 9 .3-.5 3-4.500 3.200-4.500 6.500" stroke="#fff" strokeWidth="3" />
          <circle cx="14" cy="21" r="1.900" fill="#fff" />
          <circle cx="22" cy="22" r="6" fill="#f5a524" />
          <path d="M22 18v2M22 21v5" stroke="#fff" strokeWidth="1.900" />
        </Svg>
        <Svg w={28} h={26} className="ml-[33px]">
          <path d="M11 1c2 5-2 12-10 11 4 6 14 5 16-2 1-5-3-8-6-9z" fill="#fbb91e" />
          <path d="M8 25a6 6 0 0 1-.5-12c1-5 9.500-6 11.500-.5 9-1 11.500 11 3 12.500z" fill="#c5e2f8" stroke="#a9cff0" strokeWidth=".6" />
        </Svg>
        <Fit w={36} className="ml-[11px] text-[17px] text-black">15°C</Fit>
      </div>
      <div className="flex items-center pl-[21px]">
        <Svg w={16} h={10}>
          <path d="M.7 9L8 1.200 15.300 9" stroke="#000" strokeWidth="1.500" />
        </Svg>
        <Svg w={16} h={20} className="ml-[16px]">
          <rect x="1" y="4.500" width="9.500" height="11" rx="1.500" stroke="#000" strokeWidth="1.300" />
          <path d="M10.500 9l3.500-2v6.500l-3.500-2M2.500 2c2-1.300 4.500-1.300 6.500 0M2.500 18c2 1.300 4.500 1.300 6.500 0" stroke="#000" strokeWidth="1.200" />
        </Svg>
        <Svg w={19} h={14} className="ml-[10px]">
          <path d="M.7 4.500h2.800L7.500.8v12.400L3.500 9.500H.7zM11 3.500l7 7M18 3.500l-7 7" stroke="#000" strokeWidth="1.300" />
        </Svg>
        <Svg w={20} h={15} className="ml-[12px]">
          <path d="M5 4h13v9H5zM18.500 7H20v3.500h-1.500" fill="#000" stroke="#000" strokeWidth="1" />
          <path d="M1 2v3h4V2M2 0v2M4 0v2M3 5v6h2" stroke="#000" strokeWidth="1.200" />
        </Svg>
        <Svg w={16} h={16} className="ml-[13px]">
          <path d="M1 15C1 7 7 1 15.500 1M4.500 15.500C4.500 9 9 4.800 15.500 4.800M8 15.700c0-4.500 3-7.300 7.500-7.300" stroke="#000" strokeWidth="1.200" />
          <path d="M11.500 15.500c0-2.500 1.500-4 4-4" stroke="#000" strokeWidth="1" />
          <circle cx="14" cy="14" r="1.600" fill="#000" />
        </Svg>
        <Svg w={21} h={20} className="ml-[15px]">
          <path d="M6.500 13L14 1.500c1.500-1.500 4 .5 3 2.500L10 15.500 6.500 18zM6 9.500c-7 1-7 8-2 8.500 5 .5 5-4 9-7 4-2.500 7-1.500 7 .5 0 3-3.500 2.500-5.500.500" stroke="#000" strokeWidth="1.400" />
        </Svg>
      </div>
      <div className="ml-[18px] flex flex-col pt-[3px] text-[14.500px] leading-[22px] text-black">
        <Fit w={29}>ENG</Fit>
        <Fit w={30}>INTL</Fit>
      </div>
      <div className="ml-[16px] flex flex-col items-center pt-[2px] text-[14.500px] leading-[23px] text-black">
        <Fit w={35}>22:28</Fit>
        <Fit w={75}>13/02/2022</Fit>
      </div>
      <div className="flex items-center pl-[23px]">
        <Svg w={20} h={20}>
          <path d="M0 0h20v17h-7.500L10 20l-2.500-3H0z" fill="#000" />
          <path d="M4 4.500h12M4 8.500h12M4 12.500h8" stroke="#fff" strokeWidth="1.300" />
        </Svg>
      </div>
      <div className="ml-auto mr-[5px] w-px bg-[#b4aeb6]" />
    </div>
  );
}

export default function App() {
  return (
    <div className="h-[1080px] w-[1920px] overflow-hidden bg-white font-['Open_Sans','Noto_Sans',sans-serif]">
      <TitleBar />
      <MenuBar />
      <TabStrip />
      <Toolbar />
      <Workspace />
      <Taskbar />
    </div>
  );
}
